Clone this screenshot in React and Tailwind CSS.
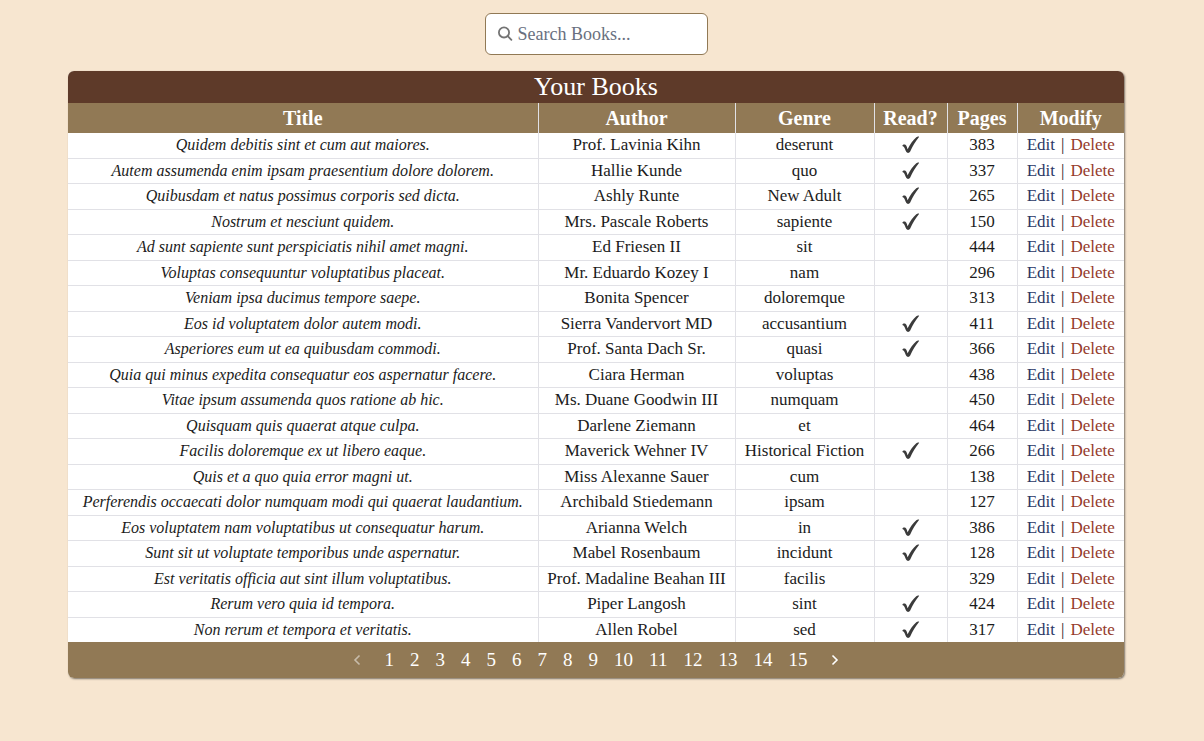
const books = [
  ["Quidem debitis sint et cum aut maiores.", "Prof. Lavinia Kihn", "deserunt", true, 383],
  ["Autem assumenda enim ipsam praesentium dolore dolorem.", "Hallie Kunde", "quo", true, 337],
  ["Quibusdam et natus possimus corporis sed dicta.", "Ashly Runte", "New Adult", true, 265],
  ["Nostrum et nesciunt quidem.", "Mrs. Pascale Roberts", "sapiente", true, 150],
  ["Ad sunt sapiente sunt perspiciatis nihil amet magni.", "Ed Friesen II", "sit", false, 444],
  ["Voluptas consequuntur voluptatibus placeat.", "Mr. Eduardo Kozey I", "nam", false, 296],
  ["Veniam ipsa ducimus tempore saepe.", "Bonita Spencer", "doloremque", false, 313],
  ["Eos id voluptatem dolor autem modi.", "Sierra Vandervort MD", "accusantium", true, 411],
  ["Asperiores eum ut ea quibusdam commodi.", "Prof. Santa Dach Sr.", "quasi", true, 366],
  ["Quia qui minus expedita consequatur eos aspernatur facere.", "Ciara Herman", "voluptas", false, 438],
  ["Vitae ipsum assumenda quos ratione ab hic.", "Ms. Duane Goodwin III", "numquam", false, 450],
  ["Quisquam quis quaerat atque culpa.", "Darlene Ziemann", "et", false, 464],
  ["Facilis doloremque ex ut libero eaque.", "Maverick Wehner IV", "Historical Fiction", true, 266],
  ["Quis et a quo quia error magni ut.", "Miss Alexanne Sauer", "cum", false, 138],
  ["Perferendis occaecati dolor numquam modi qui quaerat laudantium.", "Archibald Stiedemann", "ipsam", false, 127],
  ["Eos voluptatem nam voluptatibus ut consequatur harum.", "Arianna Welch", "in", true, 386],
  ["Sunt sit ut voluptate temporibus unde aspernatur.", "Mabel Rosenbaum", "incidunt", true, 128],
  ["Est veritatis officia aut sint illum voluptatibus.", "Prof. Madaline Beahan III", "facilis", false, 329],
  ["Rerum vero quia id tempora.", "Piper Langosh", "sint", true, 424],
  ["Non rerum et tempora et veritatis.", "Allen Robel", "sed", true, 317],
];

const columns = ["Title", "Author", "Genre", "Read?", "Pages", "Modify"];
const pages = Array.from({ length: 15 }, (_, i) => i + 1);

function Check() {
  return (
    <svg role="img" aria-label="Read" viewBox="0 0 18 18" className="mx-auto size-[18px]">
      <path
        fill="#3b3b3b"
        d="M.4 9.6C.7 8.5 2.6 8.1 3.7 9C4.7 9.9 5 11.6 5.6 13.2C8 8.4 10.8 4.2 14.3 1.2C15 .6 16.6.4 17.2.8C13.5 5.3 10.7 10.2 8.2 15.6C7.4 17.2 5 17.4 4.2 15.8C3.3 14 2.9 12.1 1.9 11C1.3 10.4.2 10.5.4 9.6Z"
      />
    </svg>
  );
}

function Chevron({ d }) {
  return (
    <svg viewBox="0 0 8 12" className="h-3 w-2" fill="none" stroke="currentColor" strokeWidth="1.6" aria-hidden="true">
      <path d={d} />
    </svg>
  );
}

function BookRow({ book: [title, author, genre, read, count] }) {
  return (
    <tr className="h-[25px] border-b border-[#e1e1e6] last:border-b-0 not-first:odd:h-[26px] *:border-r *:border-[#e1e1e6] *:p-0 *:last:border-r-0">
      <td className="text-[16px] italic">{title}</td>
      <td>{author}</td>
      <td>{genre}</td>
      <td>{read && <Check />}</td>
      <td>{count}</td>
      <td>
        <div className="flex justify-center gap-1.5">
          <a href="#edit" className="text-[#2b3766]">Edit</a>
          <span>|</span>
          <a href="#delete" className="text-[#953b2c]">Delete</a>
        </div>
      </td>
    </tr>
  );
}

export default function App() {
  return (
    <div className="min-h-screen bg-[#f7e6d0] pt-[13px] pr-3 pb-8 font-['Liberation_Serif',serif] text-[#1b1b1b]">
      <form role="search" className="flex justify-center" onSubmit={(e) => e.preventDefault()}>
        <label className="flex h-[42px] w-[223px] items-center gap-1 rounded-md border border-[#917955] bg-white pl-3">
          <svg viewBox="0 0 16 16" className="size-4 shrink-0" fill="none" stroke="#747474" strokeWidth="1.8" strokeLinecap="round" aria-hidden="true">
            <circle cx="6" cy="6.4" r="5.1" />
            <path d="M9.8 10.2 13.4 13.8" />
          </svg>
          <input
            type="search"
            aria-label="Search books"
            placeholder="Search Books..."
            className="w-full min-w-0 bg-transparent text-[18px] outline-none placeholder:text-[#697080]"
          />
        </label>
      </form>

      <main className="mx-auto mt-4 w-full max-w-[1056px] overflow-hidden rounded-md bg-white shadow-[1px_1px_2px_rgba(0,0,0,0.5)]">
        <table className="w-full table-fixed border-collapse text-center text-[17px] leading-6 whitespace-nowrap">
          <caption className="h-8 bg-[#5e3a29] text-[26px] leading-8 text-white">Your Books</caption>
          <colgroup>
            <col />
            <col className="w-[197px]" />
            <col className="w-[139px]" />
            <col className="w-[73px]" />
            <col className="w-[70px]" />
            <col className="w-[107px]" />
          </colgroup>
          <thead>
            <tr className="h-[30px] bg-[#917955] text-[20px] leading-7 text-white">
              {columns.map((name) => (
                <th key={name} scope="col" className="border-r border-[#e1e1e6] p-0 font-bold last:border-r-0">{name}</th>
              ))}
            </tr>
          </thead>
          <tbody>
            {books.map((book) => (
              <BookRow key={book[0]} book={book} />
            ))}
          </tbody>
        </table>
        <nav aria-label="Pagination" className="flex h-9 items-center justify-center bg-[#917955] text-[19px] leading-7 text-white">
          <button type="button" aria-label="Previous page" disabled className="px-2 opacity-50">
            <Chevron d="M6.5 1.5 2 6l4.5 4.5" />
          </button>
          <div className="flex px-2">
            {pages.map((page) => (
              <button type="button" key={page} className="px-2">{page}</button>
            ))}
          </div>
          <button type="button" aria-label="Next page" className="px-2">
            <Chevron d="M1.5 1.5 6 6l-4.5 4.5" />
          </button>
        </nav>
      </main>
    </div>
  );
}
